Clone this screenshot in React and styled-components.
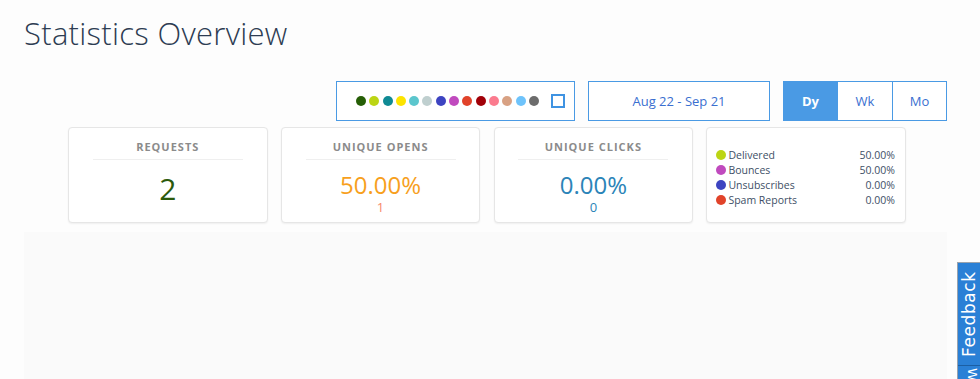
import styled, { createGlobalStyle } from "styled-components";

const dotColors = [
  "#265e06", "#bcd514", "#0f8a94", "#fde400", "#5bc6cd", "#bfcfcf", "#3d44c1",
  "#c04abe", "#e1432a", "#a10008", "#fb7b8e", "#d8a183", "#6ec3fb", "#6c6c6c",
];

const metrics = [
  { label: "Requests", value: "2", color: "#2c5a0c", big: true },
  { label: "Unique Opens", value: "50.00%", sub: "1", color: "#f7a01d", subColor: "#f7886a" },
  { label: "Unique Clicks", value: "0.00%", sub: "0", color: "#2b84b8", subColor: "#2b84b8" },
];

const legend = [
  { name: "Delivered", value: "50.00%", color: "#bcd514" },
  { name: "Bounces", value: "50.00%", color: "#c04abe" },
  { name: "Unsubscribes", value: "0.00%", color: "#3d44c1" },
  { name: "Spam Reports", value: "0.00%", color: "#e1432a" },
];

export default function App() {
  return (
    <>
      <GlobalStyle />
      <Page>
        <Title>Statistics Overview</Title>
        <Toolbar>
          <ColorBox>
            {dotColors.map((c) => (
              <Dot key={c} color={c} />
            ))}
            <Square />
          </ColorBox>
          <DateBox>Aug 22 - Sep 21</DateBox>
          <Segment>
            <SegButton active>Dy</SegButton>
            <SegButton>Wk</SegButton>
            <SegButton>Mo</SegButton>
          </Segment>
        </Toolbar>
        <Cards>
          {metrics.map((m) => (
            <Card key={m.label}>
              <Label>{m.label}</Label>
              <Value color={m.color} big={m.big}>{m.value}</Value>
              {m.sub && <Sub color={m.subColor}>{m.sub}</Sub>}
            </Card>
          ))}
          <LegendCard>
            {legend.map((l) => (
              <LegendRow key={l.name}>
                <LegendDot color={l.color} />
                <LegendName>{l.name}</LegendName>
                <LegendValue>{l.value}</LegendValue>
              </LegendRow>
            ))}
          </LegendCard>
        </Cards>
        <ChartArea />
      </Page>
      <FeedbackTab>
        <FeedbackText>Feedback</FeedbackText>
        <FeedbackExtra>W</FeedbackExtra>
      </FeedbackTab>
    </>
  );
}

const GlobalStyle = createGlobalStyle`
  html, body {
    margin: 0;
    padding: 0;
    background: #fdfdfd;
    font-family: "Open Sans", "Liberation Sans", sans-serif;
    overflow: hidden;
  }
`;

const Page = styled.div`
  padding: 0 33px 0 24px;
  height: 379px;
  display: flex;
  flex-direction: column;
`;

const Title = styled.h1`
  margin: 14px 0 0;
  font-size: 31px;
  line-height: 38px;
  font-weight: 300;
  color: #2d3c52;
  letter-spacing: 0.3px;
`;

const Toolbar = styled.div`
  display: flex;
  justify-content: flex-end;
  gap: 13px;
  margin-top: 29px;
`;

const ColorBox = styled.div`
  width: 239px;
  height: 40px;
  box-sizing: border-box;
  border: 1px solid #4a9ae4;
  background: #fff;
  display: flex;
  align-items: center;
  padding-left: 19px;
  gap: 3.3px;
`;

const Dot = styled.span`
  width: 10px;
  height: 10px;
  border-radius: 50%;
  background: ${(p) => p.color};
`;

const Square = styled.span`
  width: 10px;
  height: 10px;
  border: 2px solid #3f93e2;
  margin-left: 9px;
`;

const DateBox = styled.div`
  width: 182px;
  height: 40px;
  box-sizing: border-box;
  border: 1px solid #4a9ae4;
  background: #fff;
  display: flex;
  align-items: center;
  justify-content: center;
  font-size: 13px;
  color: #3a6fd0;
`;

const Segment = styled.div`
  display: flex;
  height: 40px;
  box-sizing: border-box;
  border: 1px solid #4a9ae4;
  background: #fff;
`;

const SegButton = styled.div`
  width: ${(p) => (p.active ? "53px" : "54px")};
  display: flex;
  align-items: center;
  justify-content: center;
  font-size: 13px;
  font-weight: ${(p) => (p.active ? 700 : 400)};
  color: ${(p) => (p.active ? "#fff" : "#3a6fd0")};
  background: ${(p) => (p.active ? "#4a9ae4" : "#fff")};
  & + & {
    border-left: 1px solid #4a9ae4;
  }
  &:last-child {
    width: 53px;
  }
`;

const Cards = styled.div`
  display: flex;
  gap: 13.3px;
  margin-top: 6px;
  padding-left: 44px;
`;

const Card = styled.div`
  width: 199.5px;
  height: 96px;
  box-sizing: border-box;
  background: #fff;
  border: 1px solid #e6e6e6;
  border-radius: 4px;
  box-shadow: 0 1px 2px rgba(0, 0, 0, 0.06);
  display: flex;
  flex-direction: column;
  align-items: center;
`;

const Label = styled.div`
  width: 150px;
  margin-top: 11px;
  padding-bottom: 5px;
  border-bottom: 1px solid #efefef;
  text-align: center;
  font-size: 11px;
  font-weight: 700;
  letter-spacing: 1px;
  text-transform: uppercase;
  color: #8b8b8b;
`;

const Value = styled.div`
  margin-top: 10px;
  font-size: ${(p) => (p.big ? "30px" : "24px")};
  line-height: ${(p) => (p.big ? "38px" : "30px")};
  color: ${(p) => p.color};
`;

const Sub = styled.div`
  font-size: 13px;
  line-height: 15px;
  color: ${(p) => p.color};
`;

const LegendCard = styled(Card)`
  align-items: stretch;
  justify-content: center;
  padding: 4px 10px 0 9px;
`;

const LegendRow = styled.div`
  display: flex;
  align-items: center;
  height: 15px;
  font-size: 10.5px;
  color: #3e4f66;
`;

const LegendDot = styled.span`
  width: 10px;
  height: 10px;
  border-radius: 50%;
  background: ${(p) => p.color};
  margin-right: 2px;
`;

const LegendName = styled.span`
  flex: 1;
`;

const LegendValue = styled.span``;

const ChartArea = styled.div`
  flex: 1;
  margin-top: 9px;
  background: #fafafa;
`;

const FeedbackTab = styled.div`
  position: fixed;
  right: 0;
  top: 262px;
  width: 22px;
  height: 130px;
  background: #2a80d6;
  border: 1px solid #9aa3ad;
  border-right: none;
  display: flex;
  flex-direction: column;
  align-items: center;
`;

const FeedbackText = styled.div`
  writing-mode: vertical-rl;
  transform: rotate(180deg);
  color: #fff;
  font-family: "DejaVu Sans", sans-serif;
  font-size: 17px;
  letter-spacing: 0.6px;
  height: 102px;
  padding-top: 8px;
  box-sizing: border-box;
  display: flex;
  align-items: center;
  justify-content: flex-start;
`;

const FeedbackExtra = styled.div`
  width: 100%;
  border-top: 1px solid #1c5fa3;
  color: #fff;
  font-family: "DejaVu Sans", sans-serif;
  font-size: 13px;
  text-align: center;
  writing-mode: vertical-rl;
  padding-top: 2px;
`;
